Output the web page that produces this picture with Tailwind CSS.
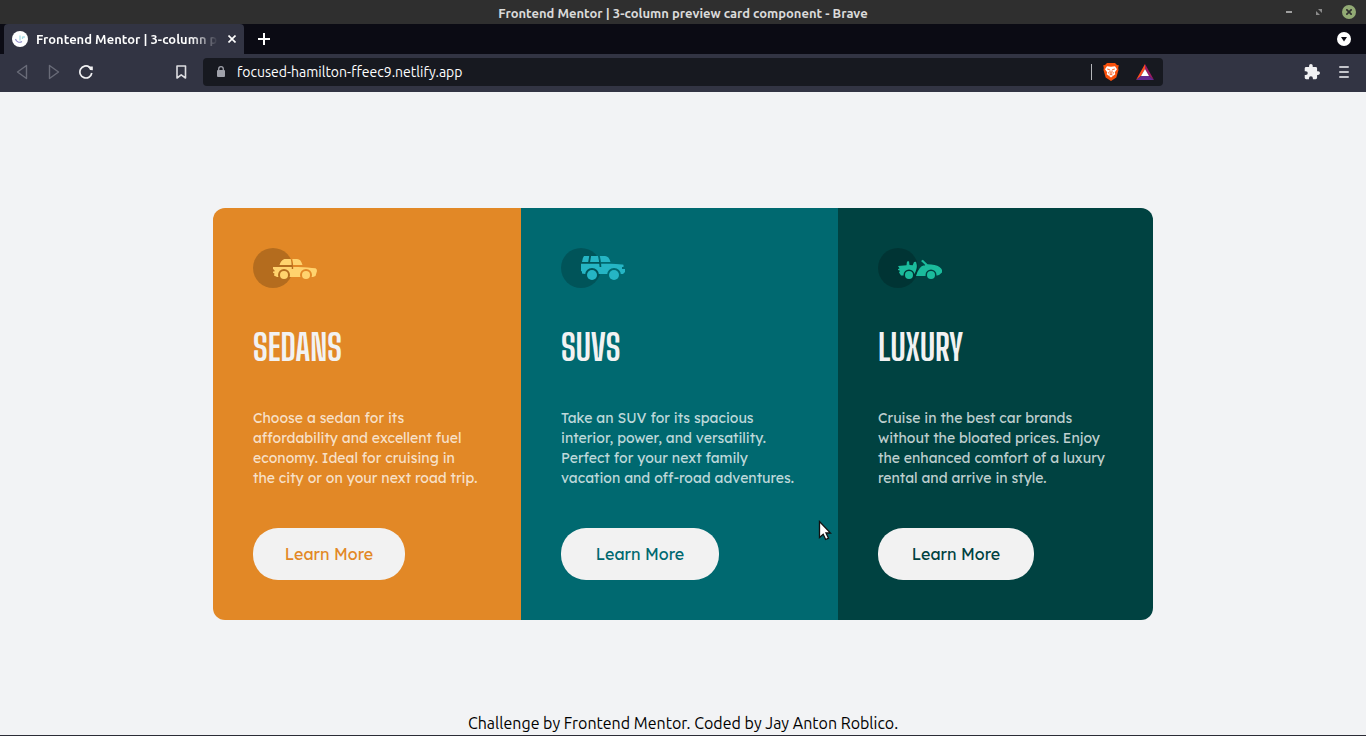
<!DOCTYPE html>
<html lang="en">
<head>
<meta charset="utf-8">
<meta name="viewport" content="width=device-width, initial-scale=1">
<title>Frontend Mentor | 3-column preview card component</title>
<script src="https://cdn.jsdelivr.net/npm/@tailwindcss/browser@4"></script>
</head>
<body class="flex min-h-screen flex-col bg-[#f2f3f5] font-['Ubuntu','Noto_Sans',sans-serif]">
<header class="text-white">
  <div class="grid h-6 grid-cols-[1fr_auto_1fr] items-center bg-[#2f2f2f]">
    <span></span>
    <p class="pt-[2px] text-[13px] leading-5 font-semibold text-[#dadada]">Frontend Mentor | 3-column preview card component - Brave</p>
    <div class="flex items-center justify-end gap-4 pr-[10px]">
      <button aria-label="Minimize" class="grid size-[14px] place-items-center"><svg width="6" height="2"><path d="M0 0h6v2H0z" fill="#a0a0a0"/></svg></button>
      <button aria-label="Restore" class="grid size-[14px] place-items-center"><svg width="6" height="6" viewBox="0 0 6 6" fill="#8b8b8b"><path d="M2 0h4v4zM0 2l4 4H0z"/></svg></button>
      <button aria-label="Close window" class="grid size-[14px] place-items-center rounded-full bg-[#92aa74]"><svg width="6" height="6" viewBox="0 0 6 6" stroke="#2f2f2f" stroke-width="1.700"><path d="M.3.3l5.400 5.400M5.700.3L.3 5.700"/></svg></button>
    </div>
  </div>
  <div class="flex h-[30px] items-center bg-[#0b0b14] pr-[15px] pl-1">
    <div class="flex h-full w-60 items-center rounded-t bg-[#323443] pr-[6px] pl-2">
      <svg class="shrink-0" width="16" height="16" viewBox="0 0 16 16" fill="none"><circle cx="8" cy="8" r="8" fill="#fff"/><path d="M3.500 8c.8 3 4 4.200 6.500 2.500" stroke="#8d8ac9" stroke-width="1.100"/><path d="M8 4.500v5M10.500 5.500v2.500M12 5v2" stroke="#a6dbe4" stroke-width="1.300"/></svg>
      <span class="ml-2 w-[182px] overflow-hidden bg-linear-to-r from-white from-85% to-transparent to-100% bg-clip-text text-[13px] leading-5 font-semibold whitespace-nowrap text-transparent">Frontend Mentor | 3-column preview</span>
      <button aria-label="Close tab" class="ml-auto grid size-3 place-items-center"><svg width="8" height="8" viewBox="0 0 8 8" stroke="#fff" stroke-width="1.600"><path d="M.5.5l7 7M7.500.5l-7 7"/></svg></button>
    </div>
    <button aria-label="New tab" class="ml-[14px]"><svg width="12" height="12" stroke="#fff" stroke-width="2"><path d="M6 0v12M0 6h12"/></svg></button>
    <button aria-label="Search tabs" class="ml-auto"><svg width="14" height="14"><circle cx="7" cy="7" r="7" fill="#fff"/><path d="M4 5h6L7 9.500z" fill="#0b0b14"/></svg></button>
  </div>
  <div class="flex h-[38px] items-center bg-[#323443] pr-[15px] pb-[2px] pl-[15px]">
    <button aria-label="Back"><svg width="14" height="16" viewBox="0 0 14 16" fill="none" stroke="#696b78" stroke-width="1.400" stroke-linejoin="round"><path d="M11.500 1.500v13L2.500 8z"/></svg></button>
    <button aria-label="Forward" class="ml-[18px]"><svg width="14" height="16" viewBox="0 0 14 16" fill="none" stroke="#696b78" stroke-width="1.400" stroke-linejoin="round"><path d="M2.500 1.500v13l9-6.500z"/></svg></button>
    <button aria-label="Reload" class="ml-[18px]"><svg width="14" height="16" viewBox="0 0 14 16" fill="none"><path d="M12.800 9A6 6 0 1 1 10.500 3.200" stroke="#f1f1f3" stroke-width="1.700"/><path d="M9 2.500h4.800V6.200L11 6z" fill="#f1f1f3"/></svg></button>
    <button aria-label="Bookmark this page" class="ml-[82px]"><svg width="12" height="14" viewBox="0 0 12 14" fill="none" stroke="#dddde1" stroke-width="1.600" stroke-linejoin="round"><path d="M2 1h8.500v12L6.200 9.800 2 13z"/></svg></button>
    <div class="ml-4 flex h-7 w-[960px] items-center rounded bg-[#171920] pr-[9px] pl-[13px]">
      <svg class="shrink-0" width="10" height="12" viewBox="0 0 10 12"><rect x="1" y="4" width="8" height="7" rx="1" fill="#a0a2ab"/><path d="M2.700 5V3a2.300 2.300 0 0 1 4.600 0v2" fill="none" stroke="#a0a2ab" stroke-width="1.300"/></svg>
      <input aria-label="Address" value="focused-hamilton-ffeec9.netlify.app" class="ml-[11px] h-6 min-w-0 flex-1 bg-transparent text-[14px] text-white outline-none">
      <span class="h-4 w-px bg-[#b5b6ba]"></span>
      <button aria-label="Brave Shields" class="ml-[11px]"><svg width="16" height="18" viewBox="0 0 16 18"><path d="M4 0h8l2 2 1.800.3L15.200 5l.3 2-2.200 7.500L8 18l-5.300-3.500L.5 7l.3-2L.2 2.300 2 2z" fill="#f8500b"/><path d="M4 3.300l4 .5 4-.5 2 3-2.200 3 .5 2-1.800 1.200L8 14.500l-2.500-2-1.800-1.200.5-2L2 6.300z" fill="#fff"/><path d="M4.200 6l2.600.7M11.800 6l-2.600.7M7 7.500v2.200l1 .8 1-.8V7.500M5 9.500l1.300 1M11 9.500l-1.300 1M6.500 12L8 11.500l1.500.5" fill="none" stroke="#f8500b" stroke-width=".9"/></svg></button>
      <button aria-label="Brave Rewards" class="ml-[17px]"><svg width="18" height="16" viewBox="0 0 18 16"><path d="M9 0v5L5 12l-5 4z" fill="#ff4b20"/><path d="M9 0l9 16-5-4-4-7z" fill="#9c1b65"/><path d="M0 16l5-4h8l5 4z" fill="#652b91"/><path d="M9 5l4 7H5z" fill="#fff"/></svg></button>
    </div>
    <button aria-label="Extensions" class="ml-auto"><svg width="16" height="16" viewBox="1 1 22 22" fill="#f1f1f3"><path d="M20.500 11H19V7a2 2 0 0 0-2-2h-4V3.500a2.500 2.500 0 0 0-5 0V5H4a2 2 0 0 0-2 2v3.800h1.500a2.700 2.700 0 0 1 0 5.400H2V20a2 2 0 0 0 2 2h3.800v-1.500a2.700 2.700 0 0 1 5.400 0V22H17a2 2 0 0 0 2-2v-4h1.500a2.500 2.500 0 0 0 0-5z"/></svg></button>
    <button aria-label="Menu" class="ml-[17px]"><svg width="14" height="14" stroke="#c4c5cb" stroke-width="2" stroke-linecap="round"><path d="M3 2h8M3 7h8M3 12h8"/></svg></button>
  </div>
</header>

<main class="grid flex-1 grid-rows-[1fr_auto_1fr]">
  <div></div>
  <div class="mx-auto grid w-full max-w-[940px] grid-cols-[308fr_317fr_315fr] overflow-hidden rounded-xl font-['Lexend_Deca','Lexend','Lato',sans-serif]">
    <section class="bg-[#e28826] p-10">
      <svg width="64" height="40" viewBox="0 0 64 40"><circle cx="20" cy="20" r="20" opacity=".2"/>
        <mask id="sedan"><path fill="#fff" d="M0 0h64v40H0z"/><path d="M38 9q1.700 5 1.500 12" fill="none" stroke="#000" stroke-width="1.500"/><circle cx="31" cy="27" r="6"/><circle cx="53" cy="27" r="6"/></mask>
        <g fill="#ffd36e"><path mask="url(#sedan)" d="M26.500 17c1.300-3.500 3-6 6-6h11.500c3 0 4.300 2 5.500 6zM20 19h25q11 .5 17.500 1.300 1.500.7 1.500 2.700l-1.500 5L60 29H24l-3-1.500.5-2-1.500-.7V23.500h1.500v-1.200L20 21z"/><circle cx="31" cy="27" r="4"/><circle cx="53" cy="27" r="4"/></g></svg>
      <h2 class="mt-[37px] text-[36px] leading-[46px] font-bold text-[#f2f2f2] uppercase font-['Big_Shoulders_Display','Liberation_Sans_Narrow','Roboto_Condensed',sans-serif]">Sedans</h2>
      <p class="mt-[37px] text-[14px] leading-5 whitespace-nowrap text-white/75">Choose a sedan for its<br>affordability and excellent fuel<br>economy. Ideal for cruising in<br>the city or on your next road trip.</p>
      <button class="mt-10 block h-[52px] w-[152px] rounded-[25px] bg-[#f2f2f2] text-[16px] text-[#e28826]">Learn More</button>
    </section>
    <section class="bg-[#006970] p-10">
      <svg width="64" height="40" viewBox="0 0 64 40"><circle cx="20" cy="20" r="20" opacity=".2"/>
        <mask id="suv"><path fill="#fff" d="M0 0h64v40H0z"/><path d="M29.300 7l-1.300 8M37.500 7q1.500 4 2 12" fill="none" stroke="#000" stroke-width="1.800"/><circle cx="31" cy="27" r="7"/><circle cx="53" cy="27" r="7"/></mask>
        <g fill="#25b5c4"><path mask="url(#suv)" d="M21 14q.5-4.500 2-6h21q4 0 5.500 6zM20 15.700h30q11 .2 12.500 1v2.300H61V21h3v3l-2 2H24l-3-.5v-2l-1-.5z"/><circle cx="31" cy="27" r="5"/><circle cx="53" cy="27" r="5"/></g></svg>
      <h2 class="mt-[37px] text-[36px] leading-[46px] font-bold text-[#f2f2f2] uppercase font-['Big_Shoulders_Display','Liberation_Sans_Narrow','Roboto_Condensed',sans-serif]">SUVs</h2>
      <p class="mt-[37px] text-[14px] leading-5 whitespace-nowrap text-white/75">Take an SUV for its spacious<br>interior, power, and versatility.<br>Perfect for your next family<br>vacation and off-road adventures.</p>
      <button class="mt-10 block h-[52px] w-[158px] rounded-[25px] bg-[#f2f2f2] text-[16px] text-[#006970]">Learn More</button>
    </section>
    <section class="bg-[#004241] p-10">
      <svg width="64" height="40" viewBox="0 0 64 40"><circle cx="20" cy="20" r="20" opacity=".2"/>
        <mask id="luxury"><path fill="#fff" d="M0 0h64v40H0z"/><circle cx="31" cy="27" r="5.500"/><circle cx="53" cy="27" r="5.500"/></mask>
        <g fill="#1bbb9c"><path mask="url(#luxury)" d="M20 18l8.500-.7.500-3.800 2-.2.500 3.700 3.200.2 1.300-3.200 2-.3.800 3.300q.5 4-2.500 9l-2 1.500H23l-2-3 1-1.700-2-.8v-1l1.500-.5zM43 13l1.800-1.200 4.700 4.500q8 .2 12 2.700 2 1.500 2.500 3v2.500l-3 2.500-2 .5-13.500.5H38q1.500-5 3.500-7.500 1.500-2.500 4-3h1.500v-.700z"/><circle cx="31" cy="27" r="4"/><circle cx="53" cy="27" r="4"/></g></svg>
      <h2 class="mt-[37px] text-[36px] leading-[46px] font-bold text-[#f2f2f2] uppercase font-['Big_Shoulders_Display','Liberation_Sans_Narrow','Roboto_Condensed',sans-serif]">Luxury</h2>
      <p class="mt-[37px] text-[14px] leading-5 whitespace-nowrap text-white/75">Cruise in the best car brands<br>without the bloated prices. Enjoy<br>the enhanced comfort of a luxury<br>rental and arrive in style.</p>
      <button class="mt-10 block h-[52px] w-[156px] rounded-[25px] bg-[#f2f2f2] text-[16px] text-[#004241]">Learn More</button>
    </section>
  </div>
  <footer class="self-end border-b border-[#2b2c36] text-center text-[16px] leading-6 text-black">Challenge by <a href="#">Frontend Mentor</a>. Coded by <a href="#">Jay Anton Roblico</a>.</footer>
</main>

<svg class="pointer-events-none absolute top-[520px] left-[818px]" width="14" height="22" viewBox="0 0 14 22" aria-hidden="true"><path d="M1.500 1.500v16l3.700-3.300 2.500 5.300 2.800-1.300L8 13h4.500z" fill="#fff" stroke="#111" stroke-width="1.300"/></svg>
</body>
</html>
